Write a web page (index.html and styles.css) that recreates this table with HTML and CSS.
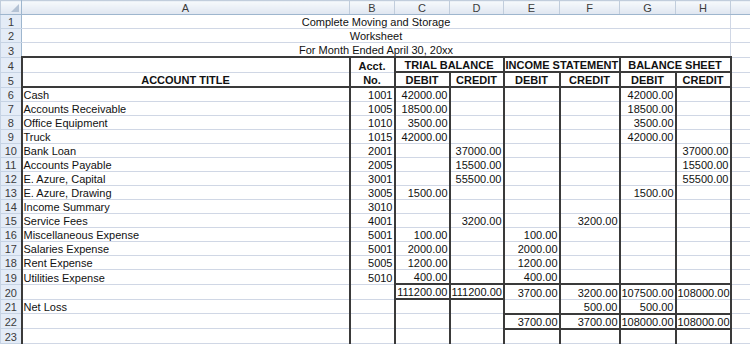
FILE: index.html
```html
<!DOCTYPE html>
<html>
<head>
<meta charset="utf-8">
<link rel="stylesheet" href="styles.css">
</head>
<body>
<table class="sheet">
<colgroup>
<col class="w-rh"><col class="w-a"><col class="w-b"><col class="w-c"><col class="w-d"><col class="w-e"><col class="w-f"><col class="w-g"><col class="w-h"><col class="w-i">
</colgroup>
<tr class="ch">
<td class="corner"><span class="tri"></span></td><td>A</td><td>B</td><td>C</td><td>D</td><td>E</td><td>F</td><td>G</td><td>H</td><td></td>
</tr>
<tr class="r"><td class="rh">1</td><td colspan="8" class="title">Complete Moving and Storage</td><td></td></tr>
<tr class="r"><td class="rh">2</td><td colspan="8" class="title">Worksheet</td><td></td></tr>
<tr class="r"><td class="rh">3</td><td colspan="8" class="title">For Month Ended April 30, 20xx</td><td></td></tr>
<tr class="r hd">
<td class="rh">4</td><td class="k t"></td><td class="k t">Acct.</td><td colspan="2" class="k t bb">TRIAL BALANCE</td><td colspan="2" class="k t bb">INCOME STATEMENT</td><td colspan="2" class="k t bb">BALANCE SHEET</td><td></td>
</tr>
<tr class="r hd">
<td class="rh">5</td><td class="k bb">ACCOUNT TITLE</td><td class="k bb">No.</td><td class="k bb">DEBIT</td><td class="k bb">CREDIT</td><td class="k bb">DEBIT</td><td class="k bb">CREDIT</td><td class="k bb">DEBIT</td><td class="k bb">CREDIT</td><td></td>
</tr>
<tr class="r b"><td class="rh">6</td><td>Cash</td><td>1001</td><td>42000.00</td><td></td><td></td><td></td><td>42000.00</td><td></td><td></td></tr>
<tr class="r b"><td class="rh">7</td><td>Accounts Receivable</td><td>1005</td><td>18500.00</td><td></td><td></td><td></td><td>18500.00</td><td></td><td></td></tr>
<tr class="r b"><td class="rh">8</td><td>Office Equipment</td><td>1010</td><td>3500.00</td><td></td><td></td><td></td><td>3500.00</td><td></td><td></td></tr>
<tr class="r b"><td class="rh">9</td><td>Truck</td><td>1015</td><td>42000.00</td><td></td><td></td><td></td><td>42000.00</td><td></td><td></td></tr>
<tr class="r b"><td class="rh">10</td><td>Bank Loan</td><td>2001</td><td></td><td>37000.00</td><td></td><td></td><td></td><td>37000.00</td><td></td></tr>
<tr class="r b"><td class="rh">11</td><td>Accounts Payable</td><td>2005</td><td></td><td>15500.00</td><td></td><td></td><td></td><td>15500.00</td><td></td></tr>
<tr class="r b"><td class="rh">12</td><td>E. Azure, Capital</td><td>3001</td><td></td><td>55500.00</td><td></td><td></td><td></td><td>55500.00</td><td></td></tr>
<tr class="r b"><td class="rh">13</td><td>E. Azure, Drawing</td><td>3005</td><td>1500.00</td><td></td><td></td><td></td><td>1500.00</td><td></td><td></td></tr>
<tr class="r b"><td class="rh">14</td><td>Income Summary</td><td>3010</td><td></td><td></td><td></td><td></td><td></td><td></td><td></td></tr>
<tr class="r b"><td class="rh">15</td><td>Service Fees</td><td>4001</td><td></td><td>3200.00</td><td></td><td>3200.00</td><td></td><td></td><td></td></tr>
<tr class="r b"><td class="rh">16</td><td>Miscellaneous Expense</td><td>5001</td><td>100.00</td><td></td><td>100.00</td><td></td><td></td><td></td><td></td></tr>
<tr class="r b"><td class="rh">17</td><td>Salaries Expense</td><td>5001</td><td>2000.00</td><td></td><td>2000.00</td><td></td><td></td><td></td><td></td></tr>
<tr class="r b"><td class="rh">18</td><td>Rent Expense</td><td>5005</td><td>1200.00</td><td></td><td>1200.00</td><td></td><td></td><td></td><td></td></tr>
<tr class="r b"><td class="rh">19</td><td>Utilities Expense</td><td>5010</td><td>400.00</td><td></td><td>400.00</td><td></td><td></td><td></td><td></td></tr>
<tr class="r b"><td class="rh">20</td><td></td><td></td><td class="t bb">111200.00</td><td class="t bb">111200.00</td><td class="t">3700.00</td><td class="t">3200.00</td><td class="t">107500.00</td><td class="t">108000.00</td><td></td></tr>
<tr class="r b"><td class="rh">21</td><td>Net Loss</td><td></td><td></td><td></td><td></td><td>500.00</td><td>500.00</td><td></td><td></td></tr>
<tr class="r b"><td class="rh">22</td><td></td><td></td><td></td><td></td><td class="t bb">3700.00</td><td class="t bb">3700.00</td><td class="t bb">108000.00</td><td class="t bb">108000.00</td><td></td></tr>
<tr class="r b"><td class="rh">23</td><td></td><td></td><td></td><td></td><td></td><td></td><td></td><td></td><td></td></tr>
</table>
</body>
</html>
```
FILE: styles.css
```css
html, body {
  margin: 0;
  padding: 0;
  background: #ffffff;
  overflow: hidden;
}
body {
  width: 750px;
  height: 345px;
  font-family: "Liberation Sans", Arial, sans-serif;
  font-size: 11px;
  color: #111;
}
.sheet {
  border-collapse: collapse;
  table-layout: fixed;
  width: 771px;
}
.w-rh { width: 21px; }
.w-a { width: 328px; }
.w-b { width: 45px; }
.w-c { width: 55px; }
.w-d { width: 54px; }
.w-e { width: 56px; }
.w-f { width: 60px; }
.w-g { width: 56px; }
.w-h { width: 55px; }
.w-i { width: 41px; }

.sheet td {
  border: 1px solid #d0d7e5;
  padding: 0 1px 0 1px;
  line-height: 12px;
  vertical-align: bottom;
  white-space: nowrap;
  overflow: hidden;
}
.ch td {
  height: 13px;
  background: linear-gradient(#f6f9fc, #dfe6f0);
  color: #3b3b3b;
  text-align: center;
  border-color: #c1cddc;
  border-bottom: 1px solid #9eb6ce;
  vertical-align: middle;
  font-size: 11px;
}
.ch td.corner {
  position: relative;
  border-right: 1px solid #9eb6ce;
}
.tri {
  position: absolute;
  right: 2px;
  bottom: 2px;
  width: 0;
  height: 0;
  border-left: 8px solid transparent;
  border-bottom: 8px solid #b4c2d4;
}
.r td {
  height: 13px;
}
.sheet td.rh {
  background: #e4ecf7;
  color: #3b3b3b;
  text-align: center;
  border-color: #c6d3e4;
  border-right: 1px solid #9eb6ce;
  padding: 0;
}
.title {
  text-align: center;
}
.hd td.k {
  font-weight: bold;
  text-align: center;
  border-left: 2px solid #3a3a3a;
  border-right: 2px solid #3a3a3a;
}
.b td:nth-child(n+2):nth-child(-n+9) {
  border-left: 2px solid #3a3a3a;
  border-right: 2px solid #3a3a3a;
}
.b td:nth-child(n+3):nth-child(-n+9) {
  text-align: right;
}
.sheet td.t {
  border-top: 2px solid #3a3a3a;
}
.sheet td.bb {
  border-bottom: 2px solid #3a3a3a;
}
```
